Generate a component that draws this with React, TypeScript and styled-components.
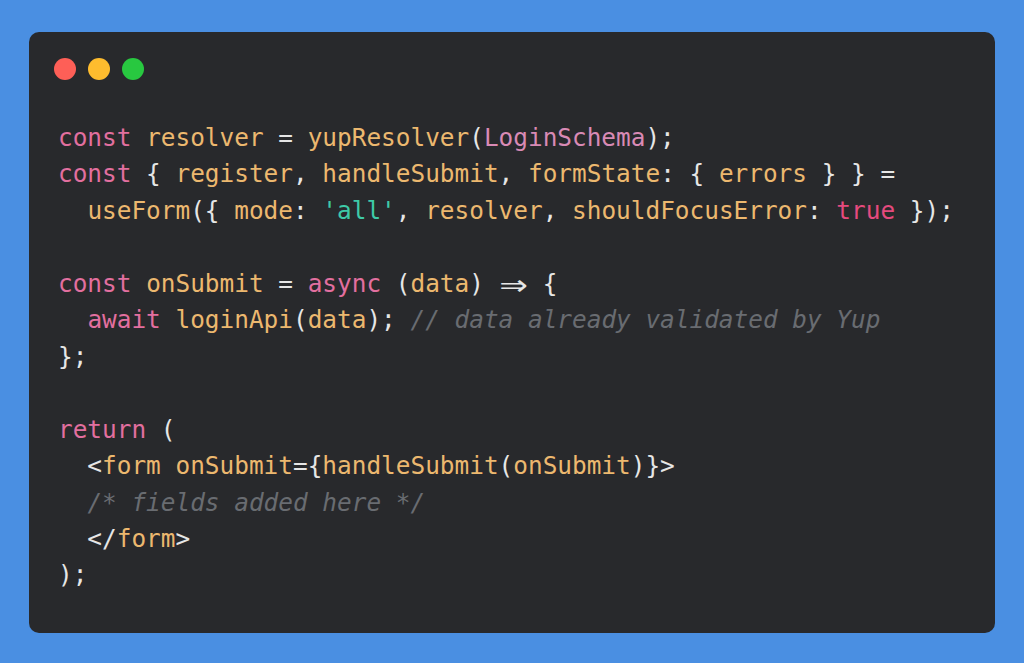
import React from "react";
import styled, { createGlobalStyle } from "styled-components";

const Global = createGlobalStyle`
  html, body { margin: 0; padding: 0; background: #4a8fe2; }
  body { width: 1024px; height: 663px; overflow: hidden; }
`;

const Page = styled.div`
  box-sizing: border-box;
  width: 1024px;
  height: 663px;
  padding: 32px 29px 30px;
  background: #4a8fe2;
`;

const Card = styled.div`
  box-sizing: border-box;
  height: 100%;
  background: #28292c;
  border-radius: 10px;
  padding: 26px 25px 0 25px;
  display: flex;
  flex-direction: column;
`;

const Dots = styled.div`
  display: flex;
  gap: 12px;
  height: 22px;
`;

const Dot = styled.span<{ $c: string }>`
  width: 22px;
  height: 22px;
  border-radius: 50%;
  background: ${(p) => p.$c};
`;

const Code = styled.pre`
  margin: 40px 0 0 4px;
  font-family: "DejaVu Sans Mono", "Liberation Mono", monospace;
  font-size: 24.4px;
  line-height: 36.45px;
  color: #e6e6e6;
  white-space: pre;
`;

const colors: Record<string, string> = {
  k: "#e26f9f",
  v: "#ecb86f",
  t: "#d98ab5",
  s: "#3ecaa8",
  b: "#e54a7e",
  c: "#696c71",
  p: "#e6e6e6",
};

const Tok = styled.span<{ $k: string }>`
  color: ${(p) => colors[p.$k]};
  font-style: ${(p) => (p.$k === "c" ? "italic" : "normal")};
`;

const Arrow = styled.span`
  display: inline-block;
  width: 2ch;
  text-align: center;
  color: #e6e6e6;
  transform: scale(1.9, 1.5);
`;

type T = [string, string];
const lines: T[][] = [
  [["k", "const"], ["p", " "], ["v", "resolver"], ["p", " = "], ["v", "yupResolver"], ["p", "("], ["t", "LoginSchema"], ["p", ");"]],
  [["k", "const"], ["p", " { "], ["v", "register"], ["p", ", "], ["v", "handleSubmit"], ["p", ", "], ["v", "formState"], ["p", ": { "], ["v", "errors"], ["p", " } } ="]],
  [["p", "  "], ["v", "useForm"], ["p", "({ "], ["v", "mode"], ["p", ": "], ["s", "'all'"], ["p", ", "], ["v", "resolver"], ["p", ", "], ["v", "shouldFocusError"], ["p", ": "], ["b", "true"], ["p", " });"]],
  [],
  [["k", "const"], ["p", " "], ["v", "onSubmit"], ["p", " = "], ["k", "async"], ["p", " ("], ["v", "data"], ["p", ") "], ["a", "⇒"], ["p", " {"]],
  [["p", "  "], ["k", "await"], ["p", " "], ["v", "loginApi"], ["p", "("], ["v", "data"], ["p", "); "], ["c", "// data already validated by Yup"]],
  [["p", "};"]],
  [],
  [["k", "return"], ["p", " ("]],
  [["p", "  <"], ["v", "form"], ["p", " "], ["v", "onSubmit"], ["p", "={"], ["v", "handleSubmit"], ["p", "("], ["v", "onSubmit"], ["p", ")}>"]],
  [["p", "  "], ["c", "/* fields added here */"]],
  [["p", "  </"], ["v", "form"], ["p", ">"]],
  [["p", ");"]],
];

export default function App() {
  return (
    <Page>
      <Global />
      <Card>
        <Dots>
          <Dot $c="#fe5f57" />
          <Dot $c="#febc2e" />
          <Dot $c="#28c840" />
        </Dots>
        <Code>
          {lines.map((line, i) => (
            <React.Fragment key={i}>
              {line.map(([k, s], j) =>
                k === "a" ? <Arrow key={j}>{s}</Arrow> : <Tok key={j} $k={k}>{s}</Tok>
              )}
              {"\n"}
            </React.Fragment>
          ))}
        </Code>
      </Card>
    </Page>
  );
}
